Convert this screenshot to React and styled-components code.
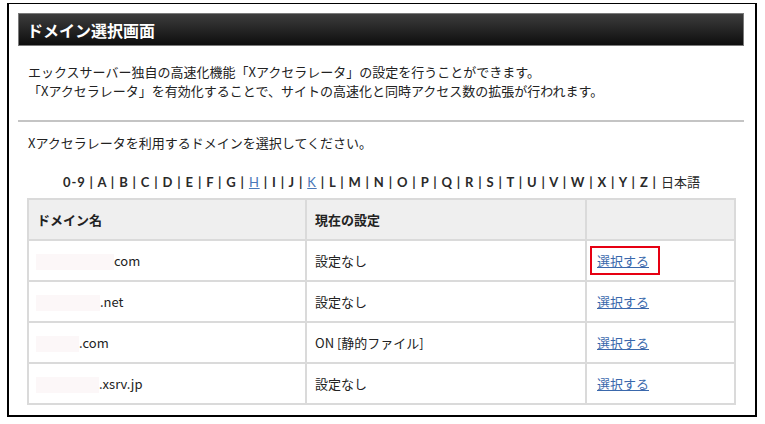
import styled, { createGlobalStyle } from "styled-components"

const Global = createGlobalStyle`
body {
  margin: 0;
  background: #fff;
  font-family: "Noto Sans CJK JP", sans-serif;
  color: #222;
}
`

const Frame = styled.div`
box-sizing: border-box;
margin: 3px 0 0 7px;
width: 750px;
height: 414px;
border: 2px solid #000;
border-top-width: 1px;
padding: 9px 11px 0 9px;
`
const TitleBar = styled.div`
height: 33px;
box-sizing: border-box;
border: 1px solid #7a7a7a;
background: linear-gradient(#3c3c3c, #0e0e0e);
display: flex;
align-items: center;
padding-left: 8px;
`
const Title = styled.h1`
margin: 0;
color: #fff;
font-size: 16px;
font-weight: bold;
font-family: "Noto Sans CJK JP", sans-serif;
`
const Text = styled.p`
margin: ${p => p.$top || 0}px 0 0 10px;
font-size: 13px;
line-height: 19px;
font-family: "Noto Sans CJK JP", sans-serif;
`
const Rule = styled.hr`
margin: 20px 0 0;
border: none;
border-top: 2px solid #c4c4c4;
`
const Body = styled.div`
padding: 0 8px 0 9px;
`
const Letters = styled.div`
margin-top: 22px;
text-align: center;
font-size: 13px;
line-height: 16px;
font-family: "Lato", "Noto Sans CJK JP", sans-serif;
font-weight: bold;
letter-spacing: 0.85px;
color: #2a2a2a;
`
const Letter = styled.span`
text-decoration: ${p => (p.$link ? "underline" : "none")};
color: ${p => (p.$link ? "#4a78b8" : "inherit")};
font-weight: ${p => (p.$link ? "normal" : "inherit")};
`
const Jp = styled.span`
font-family: "Noto Sans CJK JP", sans-serif;
font-weight: normal;
letter-spacing: 0;
`
const Table = styled.table`
margin-top: 8px;
width: 709px;
border-collapse: collapse;
font-size: 13px;
font-family: "Noto Sans CJK JP", sans-serif;
`
const Th = styled.th`
background: #efefef;
border: 2px solid #dadada;
height: 41px;
box-sizing: border-box;
text-align: left;
padding: 0 8px;
font-weight: bold;
width: ${p => p.$w}px;
`
const Td = styled.td`
border: 2px solid #dadada;
height: 41px;
box-sizing: border-box;
padding: 0 8px;
`
const Mask = styled.span`
display: inline-block;
vertical-align: middle;
width: ${p => p.$w}px;
height: 16px;
background: #fcf7f8;
margin-left: -1px;
`
const SelectLink = styled.a`
color: #3a68ac;
text-decoration: underline;
padding: 3px 9px 3px 5px;
margin: 0 -9px 0 -5px;
border: 2px solid ${p => (p.$marked ? "#e60012" : "transparent")};
`

const letters = ["0-9", "A", "B", "C", "D", "E", "F", "G", "H", "I", "J", "K", "L", "M", "N", "O", "P", "Q", "R", "S", "T", "U", "V", "W", "X", "Y", "Z"]

const rows = [
  { mask: 78, suffix: "com", setting: "設定なし" },
  { mask: 64, suffix: ".net", setting: "設定なし" },
  { mask: 43, suffix: ".com", setting: "ON [静的ファイル]" },
  { mask: 63, suffix: ".xsrv.jp", setting: "設定なし" },
]

const App = () => {
  return (
    <>
      <Global />
      <Frame>
        <TitleBar>
          <Title>ドメイン選択画面</Title>
        </TitleBar>
        <Text $top={16}>
          エックスサーバー独自の高速化機能「Xアクセラレータ」の設定を行うことができます。
          <br />
          「Xアクセラレータ」を有効化することで、サイトの高速化と同時アクセス数の拡張が行われます。
        </Text>
        <Rule />
        <Text $top={11}>Xアクセラレータを利用するドメインを選択してください。</Text>
        <Body>
          <Letters>
            {letters.map(l => (
              <span key={l}>
                <Letter $link={l === "H" || l === "K"}>{l}</Letter>
                {" | "}
              </span>
            ))}
            <Jp>日本語</Jp>
          </Letters>
          <Table>
            <thead>
              <tr>
                <Th $w={278}>ドメイン名</Th>
                <Th $w={280}>現在の設定</Th>
                <Th></Th>
              </tr>
            </thead>
            <tbody>
              {rows.map((r, i) => (
                <tr key={i}>
                  <Td>
                    <Mask $w={r.mask} />
                    {r.suffix}
                  </Td>
                  <Td>{r.setting}</Td>
                  <Td>
                    <SelectLink href="#" $marked={i === 0}>選択する</SelectLink>
                  </Td>
                </tr>
              ))}
            </tbody>
          </Table>
        </Body>
      </Frame>
    </>
  )
}

export default App
